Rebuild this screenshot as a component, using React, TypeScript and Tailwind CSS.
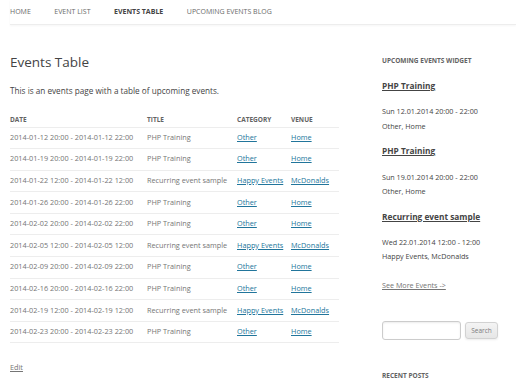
import React from 'react';

const rows = [
  ['2014-01-12 20:00 - 2014-01-12 22:00', 'PHP Training', 'Other', 'Home'],
  ['2014-01-19 20:00 - 2014-01-19 22:00', 'PHP Training', 'Other', 'Home'],
  ['2014-01-22 12:00 - 2014-01-22 12:00', 'Recurring event sample', 'Happy Events', 'McDonalds'],
  ['2014-01-26 20:00 - 2014-01-26 22:00', 'PHP Training', 'Other', 'Home'],
  ['2014-02-02 20:00 - 2014-02-02 22:00', 'PHP Training', 'Other', 'Home'],
  ['2014-02-05 12:00 - 2014-02-05 12:00', 'Recurring event sample', 'Happy Events', 'McDonalds'],
  ['2014-02-09 20:00 - 2014-02-09 22:00', 'PHP Training', 'Other', 'Home'],
  ['2014-02-16 20:00 - 2014-02-16 22:00', 'PHP Training', 'Other', 'Home'],
  ['2014-02-19 12:00 - 2014-02-19 12:00', 'Recurring event sample', 'Happy Events', 'McDonalds'],
  ['2014-02-23 20:00 - 2014-02-23 22:00', 'PHP Training', 'Other', 'Home'],
];

const widgetEvents = [
  { title: 'PHP Training', when: 'Sun 12.01.2014 20:00 - 22:00', where: 'Other, Home' },
  { title: 'PHP Training', when: 'Sun 19.01.2014 20:00 - 22:00', where: 'Other, Home' },
  { title: 'Recurring event sample', when: 'Wed 22.01.2014 12:00 - 12:00', where: 'Happy Events, McDonalds' },
];

export default function App() {
  return (
    <div className="w-[516px] h-[387px] overflow-hidden bg-white text-[#444] font-['Open_Sans',sans-serif]">
      {/* Top menu */}
      <nav className="ml-[10px] h-[25px] flex items-center gap-[23.5px] pt-[1px] border-b border-[#ededed] shadow-[0_1px_2px_rgba(0,0,0,0.04)] text-[7px] uppercase text-[#6a6a6a]">
        <span>Home</span>
        <span>Event List</span>
        <span className="font-bold text-[#444]">Events Table</span>
        <span>Upcoming Events Blog</span>
      </nav>

      <div className="flex">
        {/* Main content */}
        <main className="ml-[10px] w-[329px]">
          <h1 className="mt-[28px] text-[13.5px] leading-[18px] text-[#444]">Events Table</h1>
          <p className="mt-[14px] text-[8.2px] leading-[12px] text-[#444]">
            This is an events page with a table of upcoming events.
          </p>

          <table className="mt-[18px] w-full border-collapse text-left">
            <thead>
              <tr className="border-b border-[#ededed] h-[12px]">
                <th className="w-[137px] font-bold text-[6.5px] uppercase text-[#636363] align-top leading-[10px]">Date</th>
                <th className="w-[90px] font-bold text-[6.5px] uppercase text-[#636363] align-top leading-[10px]">Title</th>
                <th className="w-[54px] font-bold text-[6.5px] uppercase text-[#636363] align-top leading-[10px]">Category</th>
                <th className="font-bold text-[6.5px] uppercase text-[#636363] align-top leading-[10px]">Venue</th>
              </tr>
            </thead>
            <tbody className="text-[7.3px] text-[#757575]">
              {rows.map((r, i) => (
                <tr key={i} className="border-b border-[#ededed] h-[21.6px]">
                  <td className="whitespace-nowrap pb-[1px]">{r[0]}</td>
                  <td className="whitespace-nowrap pb-[1px]">{r[1]}</td>
                  <td className="whitespace-nowrap pb-[1px]">
                    <a className="underline text-[#21759b]">{r[2]}</a>
                  </td>
                  <td className="whitespace-nowrap pb-[1px]">
                    <a className="underline text-[#21759b]">{r[3]}</a>
                  </td>
                </tr>
              ))}
            </tbody>
          </table>

          <a className="block mt-[19px] text-[7.3px] leading-[10px] text-[#757575] underline">Edit</a>
        </main>

        {/* Sidebar */}
        <aside className="ml-[43px] w-[124px]">
          <h3 className="mt-[31px] text-[6.5px] leading-[10px] font-bold uppercase text-[#636363]">Upcoming Events Widget</h3>
          {widgetEvents.map((e, i) => (
            <div key={i} className={i === 0 ? 'mt-[14px]' : 'mt-[12.5px]'}>
              <a className="block text-[8.3px] leading-[12px] font-bold text-[#444] underline">{e.title}</a>
              <div className="mt-[12.3px] text-[7.2px] leading-[14.3px] text-[#444]">
                <div>{e.when}</div>
                <div>{e.where}</div>
              </div>
            </div>
          ))}
          <a className="block mt-[16px] text-[7.2px] leading-[10px] text-[#757575] underline">See More Events -&gt;</a>

          <div className="mt-[31.5px] flex items-center gap-[4px]">
            <div className="w-[79px] h-[19px] border border-[#ccc] rounded-[3px] shadow-[inset_0_1px_2px_rgba(0,0,0,0.08)] bg-white" />
            <button className="w-[33px] h-[17px] border border-[#d2d2d2] rounded-[3px] bg-gradient-to-b from-[#f4f4f4] to-[#e6e6e6] text-[6.5px] text-[#7c7c7c] shadow-[0_1px_2px_rgba(64,64,64,0.1)]">
              Search
            </button>
          </div>

          <h3 className="mt-[31px] text-[6.5px] leading-[10px] font-bold uppercase text-[#636363]">Recent Posts</h3>
        </aside>
      </div>
    </div>
  );
}
